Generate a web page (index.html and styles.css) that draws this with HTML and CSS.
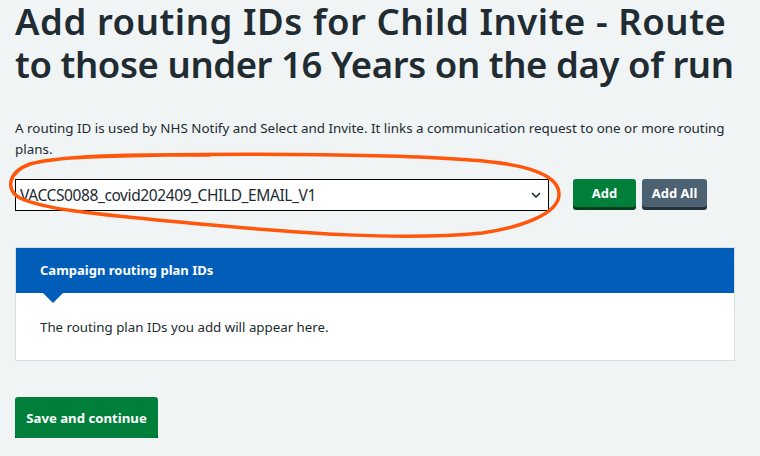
FILE: index.html
```html
<!DOCTYPE html>
<html lang="en">
<head>
<meta charset="utf-8">
<title>Add routing IDs</title>
<link rel="stylesheet" href="styles.css">
</head>
<body>
<main class="page">
  <h1 class="title"><span class="title-line wide">Add routing IDs for Child Invite - Route</span> <span class="title-line narrow">to those under 16 Years on the day of run</span></h1>
  <p class="hint">A routing ID is used by NHS Notify and Select and Invite. It links a communication request to one or more routing plans.</p>
  <div class="picker">
    <div class="select">
      <span class="select-value">VACCS0088_covid202409_CHILD_EMAIL_V1</span>
      <svg class="chevron" width="10" height="6" viewBox="0 0 10 6"><path d="M1 1 L5 5 L9 1" fill="none" stroke="#212b32" stroke-width="1.6"/></svg>
    </div>
    <button class="btn btn-green btn-small">Add</button>
    <button class="btn btn-grey btn-small">Add All</button>
    <svg class="scribble" width="580" height="100" viewBox="0 150 580 100"><path d="M70 158 C200 152 400 154 470 160 C530 164 560 176 559 195 C558 214 522 227 482 233 C400 241 300 233 200 224 C120 216 50 212 20 198 C5 190 8 172 30 164 C60 156 120 154 210 155" fill="none" stroke="#ff560a" stroke-width="3.5" stroke-linecap="round"/></svg>
  </div>
  <section class="card">
    <div class="card-head">Campaign routing plan IDs</div>
    <div class="card-body">The routing plan IDs you add will appear here.</div>
  </section>
  <button class="btn btn-green btn-large">Save and continue</button>
</main>
</body>
</html>
```
FILE: styles.css
```css
html, body {
  margin: 0;
  padding: 0;
  background: #f0f4f5;
}
body {
  font-family: "Noto Sans", "Open Sans", sans-serif;
  color: #212b32;
  overflow: hidden;
}
.page {
  padding: 0 15px;
}
.title {
  margin: 0;
  font-size: 36.5px;
  line-height: 43px;
  font-weight: 600;
  width: 745px;
}
.title-line {
  display: block;
  white-space: nowrap;
}
.title-line.wide {
  letter-spacing: 0.55px;
}
.title-line.narrow {
  letter-spacing: -0.42px;
}
.hint {
  margin: 32px 0 0;
  font-size: 13.4px;
  line-height: 21px;
  width: 725px;
}
.picker {
  position: relative;
  display: flex;
  align-items: flex-start;
  margin-top: 19px;
}
.select {
  box-sizing: border-box;
  width: 534px;
  height: 32px;
  background: #fff;
  border: 1px solid #000;
  display: flex;
  align-items: center;
  justify-content: space-between;
  padding: 0 7px 0 4px;
  font-size: 15.5px;
}
.select-value {
  letter-spacing: -0.4px;
}
.btn {
  font-family: inherit;
  border: 0;
  border-radius: 3px;
  color: #fff;
  font-weight: 700;
  cursor: pointer;
  padding: 0;
}
.btn-small {
  font-size: 13px;
}
.btn-green {
  background: #007f3b;
  box-shadow: 0 3px 0 #00401e;
}
.btn-grey {
  background: #4c6272;
  box-shadow: 0 3px 0 #263139;
}
.picker .btn-green {
  width: 63px;
  margin-left: 24px;
  height: 28px;
}
.picker .btn-grey {
  width: 65px;
  margin-left: 6px;
  height: 28px;
}
.scribble {
  position: absolute;
  left: -15px;
  top: -29px;
  pointer-events: none;
}
.card {
  margin-top: 36px;
  width: 720px;
  box-sizing: border-box;
  border: 1px solid #d8dde0;
  background: #fff;
}
.card-head {
  position: relative;
  background: #005eb8;
  color: #fff;
  font-weight: 700;
  font-size: 13px;
  height: 45px;
  line-height: 45px;
  padding-left: 24px;
}
.card-head::after {
  content: "";
  position: absolute;
  left: 27px;
  top: 45px;
  border-left: 10px solid transparent;
  border-right: 10px solid transparent;
  border-top: 10px solid #005eb8;
}
.card-body {
  padding: 24px 24px 22px;
  font-size: 13.3px;
  line-height: 21px;
}
.btn-large {
  margin-top: 36px;
  width: 143px;
  height: 41px;
  font-size: 13.2px;
}
```
